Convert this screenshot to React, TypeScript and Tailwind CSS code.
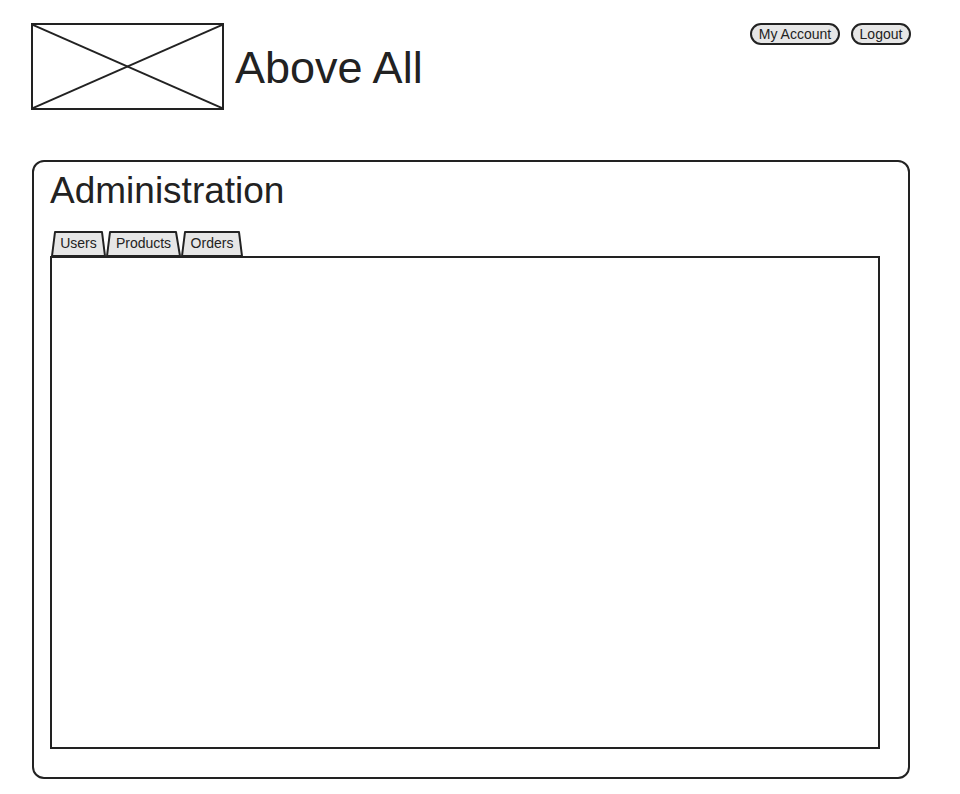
const tabs = [
  { label: 'Users', w: 'w-[55px]', vb: '0 0 55 25', pts: '1,25 4,1 51,1 54,25' },
  { label: 'Products', w: 'w-[75px]', vb: '0 0 75 25', pts: '1,25 4,1 70,1 74,25' },
  { label: 'Orders', w: 'w-[62px]', vb: '0 0 62 25', pts: '1,25 4,1 58,1 61,25' },
];

const App = () => {
  return (
    <div className="w-[960px] h-[794px] bg-white text-[#222] font-['Liberation_Sans',Arial,sans-serif] overflow-hidden">
      {/* header */}
      <div className="flex items-start pt-[23px] pl-[31px] pr-[49px]">
        <div className="w-[193px] h-[87px] border-2 border-[#222] relative">
          <svg className="absolute inset-0 w-full h-full" viewBox="0 0 189 83" preserveAspectRatio="none">
            <line x1="0" y1="0" x2="189" y2="83" stroke="#222" strokeWidth="2" />
            <line x1="189" y1="0" x2="0" y2="83" stroke="#222" strokeWidth="2" />
          </svg>
        </div>
        <h1 className="ml-[11px] mt-[22px] text-[45px] leading-none">Above All</h1>
        <div className="ml-auto flex gap-[11px]">
          <button className="w-[90px] h-[22px] rounded-full border-2 border-[#222] bg-[#e6e6e6] text-[14px] leading-[18px]">
            My Account
          </button>
          <button className="w-[60px] h-[22px] rounded-full border-2 border-[#222] bg-[#e6e6e6] text-[14px] leading-[18px]">
            Logout
          </button>
        </div>
      </div>

      {/* admin panel */}
      <div className="ml-[32px] mt-[50px] w-[878px] h-[619px] border-2 border-[#222] rounded-[12px] pl-[16px] pt-[10px]">
        <h2 className="text-[37px] leading-none">Administration</h2>
        <div className="mt-[22px] flex pl-[1px]">
          {tabs.map((t) => (
            <div key={t.label} className={`relative h-[25px] ${t.w} flex items-center justify-center text-[14px]`}>
              <svg className="absolute inset-0 w-full h-full" viewBox={t.vb} preserveAspectRatio="none">
                <polygon points={t.pts} fill="#e6e6e6" stroke="#222" strokeWidth="2" strokeLinejoin="round" />
              </svg>
              <span className="relative">{t.label}</span>
            </div>
          ))}
        </div>
        <div className="w-[830px] h-[493px] border-2 border-[#222] bg-white"></div>
      </div>
    </div>
  );
};

export default App;
